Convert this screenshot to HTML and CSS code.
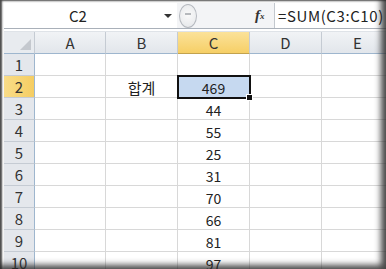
FILE: index.html
```html
<!DOCTYPE html>
<html>
  <head>
    <title>합계</title>
    <link rel="stylesheet" href="styles.css">
  </head>
  <body>
    <div class="window">
      <div class="formula-bar">
        <div class="name-box">
          <span class="name">C2</span>
          <span class="arrow"></span>
        </div>
        <div class="splitter"><span class="grip"></span></div>
        <div class="fx"><i>f</i><sub>x</sub></div>
        <div class="formula">=SUM(C3:C10)</div>
      </div>

      <div class="sheet">
        <div class="corner"><span class="tri"></span></div>
        <div class="col-head">A</div>
        <div class="col-head">B</div>
        <div class="col-head active">C</div>
        <div class="col-head">D</div>
        <div class="col-head">E</div>

        <div class="row-head">1</div>
        <div class="cell"></div><div class="cell"></div><div class="cell"></div><div class="cell"></div><div class="cell"></div>

        <div class="row-head active">2</div>
        <div class="cell"></div><div class="cell label">합계</div><div class="cell selected">469</div><div class="cell"></div><div class="cell"></div>

        <div class="row-head">3</div>
        <div class="cell"></div><div class="cell"></div><div class="cell">44</div><div class="cell"></div><div class="cell"></div>

        <div class="row-head">4</div>
        <div class="cell"></div><div class="cell"></div><div class="cell">55</div><div class="cell"></div><div class="cell"></div>

        <div class="row-head">5</div>
        <div class="cell"></div><div class="cell"></div><div class="cell">25</div><div class="cell"></div><div class="cell"></div>

        <div class="row-head">6</div>
        <div class="cell"></div><div class="cell"></div><div class="cell">31</div><div class="cell"></div><div class="cell"></div>

        <div class="row-head">7</div>
        <div class="cell"></div><div class="cell"></div><div class="cell">70</div><div class="cell"></div><div class="cell"></div>

        <div class="row-head">8</div>
        <div class="cell"></div><div class="cell"></div><div class="cell">66</div><div class="cell"></div><div class="cell"></div>

        <div class="row-head">9</div>
        <div class="cell"></div><div class="cell"></div><div class="cell">81</div><div class="cell"></div><div class="cell"></div>

        <div class="row-head">10</div>
        <div class="cell"></div><div class="cell"></div><div class="cell">97</div><div class="cell"></div><div class="cell"></div>
      </div>

      <!-- dark shaded frame round the picture -->
      <div class="frame"></div>
    </div>
  </body>
</html>
```

FILE: styles.css
```css
body {
  margin: 0;
  font-family: "Noto Sans CJK KR", "Noto Sans", sans-serif;
  color: #222;
}

.window {
  position: relative;
  width: 386px;
  height: 269px;
  overflow: hidden;
  background-color: #fff;
  padding: 3px 0 0 4px;
  box-sizing: border-box;
}

.frame {
  position: absolute;
  top: 0;
  left: 0;
  right: 0;
  bottom: 0;
  pointer-events: none;
  box-shadow:
    inset 3px 2px 2px -1px rgba(40, 40, 40, 0.85),
    inset -7px -6px 6px -2px rgba(40, 40, 40, 0.85);
}

/* formula bar */
.formula-bar {
  display: flex;
  height: 25px;
  border-bottom: 1px solid #a9b0b9;
  background-color: #f3f4f6;
}

.name-box {
  width: 173px;
  display: flex;
  align-items: center;
  background-color: #fff;
}

.name-box .name {
  flex: 1;
  text-align: center;
  font-size: 15px;
  padding-right: 12px;
}

.name-box .arrow {
  width: 0;
  height: 0;
  border-left: 4px solid transparent;
  border-right: 4px solid transparent;
  border-top: 4px solid #333;
  margin-right: 5px;
}

.splitter {
  width: 76px;
  display: flex;
  align-items: center;
}

.splitter .grip {
  width: 16px;
  height: 22px;
  margin-left: 2px;
  border-radius: 50%;
  border: 1px solid #b5b9bf;
  background: radial-gradient(circle at 50% 45%, #fafafa, #e3e5e8);
  position: relative;
}

.splitter .grip::after {
  content: "";
  position: absolute;
  left: 5px;
  top: 8px;
  width: 6px;
  height: 2px;
  background-color: #b6b9bd;
}

.fx {
  width: 21px;
  font-family: "Liberation Serif", serif;
  font-size: 15px;
  font-weight: bold;
  color: #333;
  display: flex;
  align-items: center;
  padding-left: 2px;
  box-sizing: border-box;
}

.fx sub {
  font-size: 9px;
  font-style: italic;
  vertical-align: -1px;
}

.formula {
  flex: 1;
  background-color: #fff;
  border-left: 1px solid #c3c8ce;
  font-size: 15px;
  letter-spacing: 0.6px;
  line-height: 25px;
  padding-left: 3px;
  white-space: nowrap;
}

/* sheet grid */
.sheet {
  margin-top: 2px;
  border-top: 1px solid #dfe3e8;
  display: grid;
  grid-template-columns: 31px 71px 72px 72px 72px 72px;
  grid-auto-rows: 22px;
}

.corner,
.col-head,
.row-head,
.cell {
  box-sizing: border-box;
  display: flex;
  align-items: center;
  justify-content: center;
  font-size: 14px;
}

.corner {
  background-color: #e8ebef;
  border-right: 1px solid #c5cbd3;
  border-bottom: 1px solid #9eb6ce;
  position: relative;
}

.corner .tri {
  position: absolute;
  right: 3px;
  bottom: 3px;
  width: 0;
  height: 0;
  border-left: 11px solid transparent;
  border-bottom: 11px solid #c4c8ce;
}

.col-head {
  background: linear-gradient(#f1f3f6, #e2e6eb);
  border-right: 1px solid #c5cbd3;
  border-bottom: 1px solid #9eb6ce;
  font-size: 15px;
  color: #333;
}

.row-head {
  background-color: #e4e7ec;
  border-right: 1px solid #9eb6ce;
  border-bottom: 1px solid #c5cbd3;
  font-size: 15px;
  color: #333;
}

.col-head.active {
  background: linear-gradient(#fbe29a, #f6cf66);
  border-bottom-color: #c2a24e;
}

.row-head.active {
  background: linear-gradient(90deg, #f9dc88, #f5cd62);
}

.cell {
  border-right: 1px solid #d8d8d8;
  border-bottom: 1px solid #d8d8d8;
  padding-top: 2px;
}

.cell.label {
  font-size: 15px;
}

.cell.selected {
  background-color: #c6d9f0;
  outline: 2px solid #111;
  outline-offset: -1px;
  position: relative;
}

.cell.selected::after {
  content: "";
  position: absolute;
  right: -4px;
  bottom: -4px;
  width: 5px;
  height: 5px;
  background-color: #111;
  border: 1px solid #fff;
}
```
